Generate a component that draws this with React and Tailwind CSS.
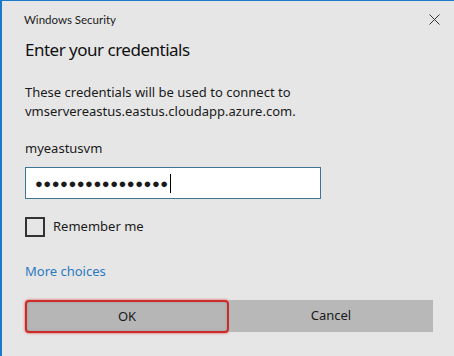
import { useState } from 'react';

const font = { fontFamily: '"Segoe UI", "Noto Sans", "Open Sans", sans-serif' };
const narrow = { fontFamily: '"Segoe UI", Lato, "Noto Sans", sans-serif' };

export default function App() {
  const [remember, setRemember] = useState(false);

  return (
    <div
      className="w-[454px] h-[356px] bg-[#e6e6e6] border-t border-l-2 border-[#1979ca] text-[#1a1a1a] flex flex-col"
      style={font}
    >
      {/* title bar */}
      <div className="flex items-center justify-between pl-[22px] pr-[14px] pt-[9px] h-[28px]">
        <span className="text-[11.5px]" style={narrow}>Windows Security</span>
        <svg width="11" height="11" viewBox="0 0 11 11" className="text-[#333]">
          <path d="M0.5 0.5L10.5 10.5M10.5 0.5L0.5 10.5" stroke="currentColor" strokeWidth="1" />
        </svg>
      </div>

      <div className="flex flex-col pl-[23px] pr-[22px]">
        <h1 className="text-[17px] tracking-[-0.5px] leading-[28px] mt-[7px] text-[#111]">
          Enter your credentials
        </h1>

        <p className="text-[13px] leading-[19px] mt-[19px]">
          These credentials will be used to connect to
          <br />
          vmservereastus.eastus.cloudapp.azure.com.
        </p>

        <div className="text-[13px] leading-[16px] mt-[19px]">myeastusvm</div>

        <div className="mt-[11px] w-[296px] h-[32px] bg-white border border-[#3b7693] flex items-center pl-[9px]">
          <span className="text-[13px] tracking-[0.5px] leading-none">●●●●●●●●●●●●●●●●</span>
          <span className="w-px h-[19px] bg-black ml-[1px]" />
        </div>

        <label className="flex items-center gap-[8px] mt-[18px] cursor-pointer">
          <span
            className="w-[20px] h-[20px] border-2 border-[#333] bg-transparent"
            onClick={() => setRemember((v) => !v)}
          >
            {remember && (
              <svg viewBox="0 0 16 16" className="w-full h-full">
                <path d="M3 8l3 3 7-7" stroke="#333" strokeWidth="1.5" fill="none" />
              </svg>
            )}
          </span>
          <span className="text-[13px]">Remember me</span>
        </label>

        <a className="text-[13px] text-[#2a7bbf] mt-[25px] leading-[18px]">More choices</a>

        <div className="flex mt-[20px] w-[408px]">
          <button
            type="button"
            className="w-[204px] h-[33px] bg-[#b6b6b6] border-2 border-[#cc2b2b] rounded-[4px] shadow-[0_0_2px_1px_rgba(230,80,80,0.5),inset_0_0_3px_rgba(0,0,0,0.15)] text-[13px]"
          >
            OK
          </button>
          <button type="button" className="w-[204px] h-[32px] bg-[#b8b8b8] text-[13px]">
            Cancel
          </button>
        </div>
      </div>
    </div>
  );
}
